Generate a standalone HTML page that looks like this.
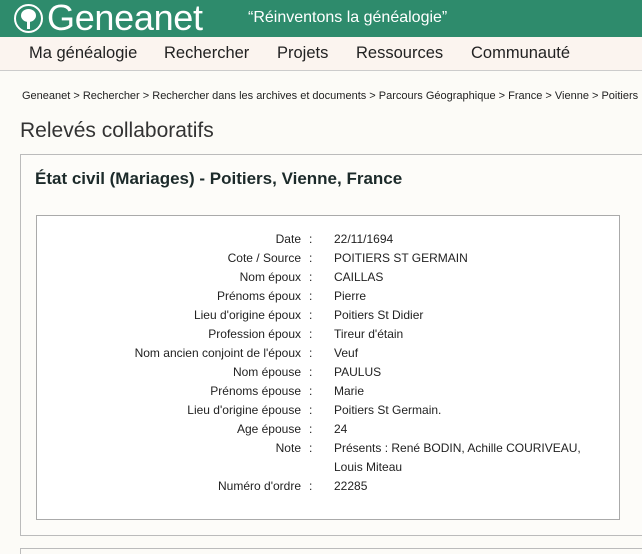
<!DOCTYPE html>
<html><head><meta charset="utf-8"><style>
html,body{margin:0;width:642px;height:554px;overflow:hidden}
body{background:#fcfbf7;font-family:"Liberation Sans",sans-serif;position:relative}
.hdr{position:absolute;left:0;top:0;width:642px;height:37px;background:#2e8b6c}
.logo{position:absolute;left:47px;top:-2px;color:#fff;font-size:36px;line-height:40px;letter-spacing:-0.3px}
.circ{position:absolute;left:14px;top:4px;width:29px;height:29px;border:2px solid #fff;border-radius:50%;box-sizing:border-box;background:#2e8b6c}
.circ i{position:absolute;left:5px;top:3px;width:15px;height:13px;background:#fff;border-radius:50%}
.circ b{position:absolute;left:11px;top:14px;width:3px;height:9px;background:#fff}
.tag{position:absolute;left:248px;top:9px;color:#fff;font-size:16px}
.nav{position:absolute;left:0;top:37px;width:642px;height:33px;background:#fbf4ef;border-bottom:1px solid #ccc}
.nav span{position:absolute;top:7px;font-size:16.5px;color:#222}
.bc{position:absolute;left:22px;top:90px;font-size:11px;color:#222;white-space:nowrap}
h1{position:absolute;left:20px;top:119px;margin:0;font-weight:normal;font-size:21px;color:#333}
.card{position:absolute;left:20px;top:154px;width:640px;height:380px;border:1px solid #bbb;background:#fdfcf9}
.card2{position:absolute;left:20px;top:548px;width:640px;height:20px;border:1px solid #bbb}
h2{position:absolute;left:14px;top:14px;margin:0;font-size:17px;color:#1c2a2a}
.box{position:absolute;left:15px;top:60px;width:582px;height:303px;border:1px solid #aaa;background:#fff}
.r{position:absolute;left:0;width:582px;font-size:12px;color:#222;height:19px}
.r .l{position:absolute;right:318px;text-align:right;white-space:nowrap}
.r .c{position:absolute;left:272px}
.r .v{position:absolute;left:297px;white-space:nowrap}
</style></head><body>
<div class="hdr"><div class="circ"><i></i><b></b></div><div class="logo">Geneanet</div><div class="tag">“Réinventons la généalogie”</div></div>
<div class="nav"><span style="left:29px">Ma généalogie</span><span style="left:164px">Rechercher</span><span style="left:277px">Projets</span><span style="left:356px">Ressources</span><span style="left:471px">Communauté</span></div>
<div class="bc">Geneanet &gt; Rechercher &gt; Rechercher dans les archives et documents &gt; Parcours Géographique &gt; France &gt; Vienne &gt; Poitiers</div>
<h1>Relevés collaboratifs</h1>
<div class="card"><h2>État civil (Mariages) - Poitiers, Vienne, France</h2>
<div class="box">
<div class="r" style="top:16px"><span class="l">Date</span><span class="c">:</span><span class="v">22/11/1694</span></div>
<div class="r" style="top:35px"><span class="l">Cote / Source</span><span class="c">:</span><span class="v">POITIERS ST GERMAIN</span></div>
<div class="r" style="top:54px"><span class="l">Nom époux</span><span class="c">:</span><span class="v">CAILLAS</span></div>
<div class="r" style="top:73px"><span class="l">Prénoms époux</span><span class="c">:</span><span class="v">Pierre</span></div>
<div class="r" style="top:92px"><span class="l">Lieu d'origine époux</span><span class="c">:</span><span class="v">Poitiers St Didier</span></div>
<div class="r" style="top:111px"><span class="l">Profession époux</span><span class="c">:</span><span class="v">Tireur d'étain</span></div>
<div class="r" style="top:130px"><span class="l">Nom ancien conjoint de l'époux</span><span class="c">:</span><span class="v">Veuf</span></div>
<div class="r" style="top:149px"><span class="l">Nom épouse</span><span class="c">:</span><span class="v">PAULUS</span></div>
<div class="r" style="top:168px"><span class="l">Prénoms épouse</span><span class="c">:</span><span class="v">Marie</span></div>
<div class="r" style="top:187px"><span class="l">Lieu d'origine épouse</span><span class="c">:</span><span class="v">Poitiers St Germain.</span></div>
<div class="r" style="top:206px"><span class="l">Age épouse</span><span class="c">:</span><span class="v">24</span></div>
<div class="r" style="top:225px"><span class="l">Note</span><span class="c">:</span><span class="v">Présents : René BODIN, Achille COURIVEAU,</span></div>
<div class="r" style="top:244px"><span class="v">Louis Miteau</span></div>
<div class="r" style="top:263px"><span class="l">Numéro d'ordre</span><span class="c">:</span><span class="v">22285</span></div>
</div></div>
<div class="card2"></div>
</body></html>
